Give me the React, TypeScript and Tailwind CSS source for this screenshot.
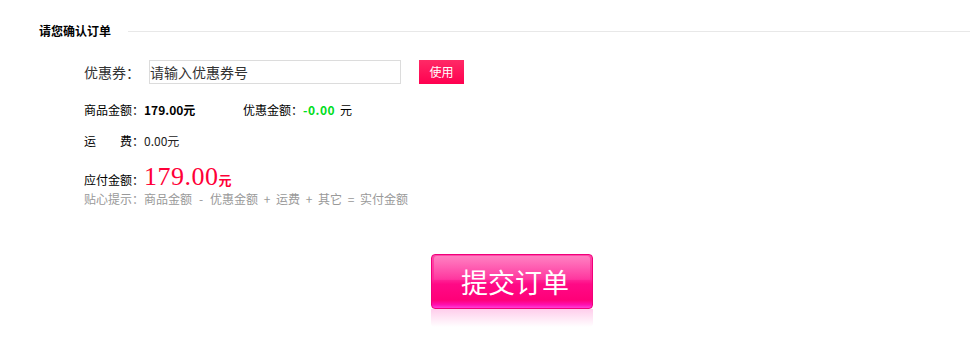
import React from "react";

function Op({ c }: { c: string }) {
  return <span className="inline-block w-[18px] text-center">{c}</span>;
}

export default function App() {
  const font = { fontFamily: '"SimSun","Noto Sans CJK SC",sans-serif' };
  return (
    <div className="w-[970px] h-[346px] bg-white text-[#333] overflow-hidden" style={font}>
      <div className="pt-[24px]">
        {/* Title */}
        <div className="flex items-center h-[14px] pl-[39px]">
          <span className="text-[12px] font-bold text-black leading-none">请您确认订单</span>
          <div className="flex-1 ml-[17px] h-px bg-[#e8e8e8]" />
        </div>

        <div className="pl-[84px]">
          {/* Coupon row */}
          <div className="flex items-center mt-[22px] h-[24px]">
            <span className="w-[65px] text-[14px] leading-none text-[#333]">优惠券：</span>
            <input
              className="w-[252px] h-[24px] border border-[#dcdcdc] pl-0 text-[14px] text-[#333] placeholder:text-[#333] outline-none"
              placeholder="请输入优惠券号"
              style={font}
            />
            <button className="ml-[18px] w-[45px] h-[24px] bg-[linear-gradient(#ff2a66,#ff0050)] text-white text-[12px] leading-none">
              使用
            </button>
          </div>

          {/* Amount row */}
          <div className="flex items-center mt-[16px] h-[20px] text-[12px] text-black">
            <div className="w-[159px] flex items-center">
              <span>商品金额：</span>
              <span className="font-bold">179.00元</span>
            </div>
            <span>优惠金额：</span>
            <span className="text-[#00dd22] font-bold tracking-[0.5px]">-0.00</span>
            <span className="ml-[5px]">元</span>
          </div>

          {/* Freight */}
          <div className="flex items-center mt-[11px] h-[20px] text-[12px] text-black">
            <span className="inline-flex w-[60px] justify-between">
              <span>运</span>
              <span>费：</span>
            </span>
            <span className="text-[#222]">0.00元</span>
          </div>

          {/* Payable */}
          <div className="flex items-baseline mt-[12px] h-[28px] text-[12px] text-black">
            <span>应付金额：</span>
            <span
              className="text-[26px] leading-[28px] text-[#ff0038]"
              style={{ fontFamily: '"Liberation Serif","Times New Roman",serif', letterSpacing: "0.5px" }}
            >
              179.00
            </span>
            <span className="text-[13px] font-bold text-[#ff0038]">元</span>
          </div>

          {/* Hint */}
          <div className="flex items-center h-[16px] text-[12px] text-[#999] whitespace-nowrap">
            贴心提示：商品金额<Op c="-" />优惠金额<Op c="+" />运费<Op c="+" />其它<Op c="=" />实付金额
          </div>
        </div>

        {/* Submit button */}
        <div className="ml-[431px] mt-[47px] w-[162px]">
          <button className="relative w-[162px] h-[55px] rounded-[4px] border border-[#f0007a] bg-[linear-gradient(#ff4aa8_0%,#ff2898_45%,#ff0a86_55%,#ff0078_85%,#ff10b0_94%,#ff40d8_100%)] text-white text-[27px] leading-none overflow-hidden pl-[6px]">
            <span className="absolute inset-x-[2px] top-[1px] h-[24px] rounded-t-[3px] bg-[linear-gradient(rgba(255,255,255,0.3),rgba(255,255,255,0.06))]" />
            <span className="relative" style={font}>提交订单</span>
          </button>
          <div className="w-[162px] h-[18px] rounded-b-[4px] bg-[linear-gradient(rgba(255,90,190,0.3),rgba(255,255,255,0))]" />
        </div>
      </div>
    </div>
  );
}
